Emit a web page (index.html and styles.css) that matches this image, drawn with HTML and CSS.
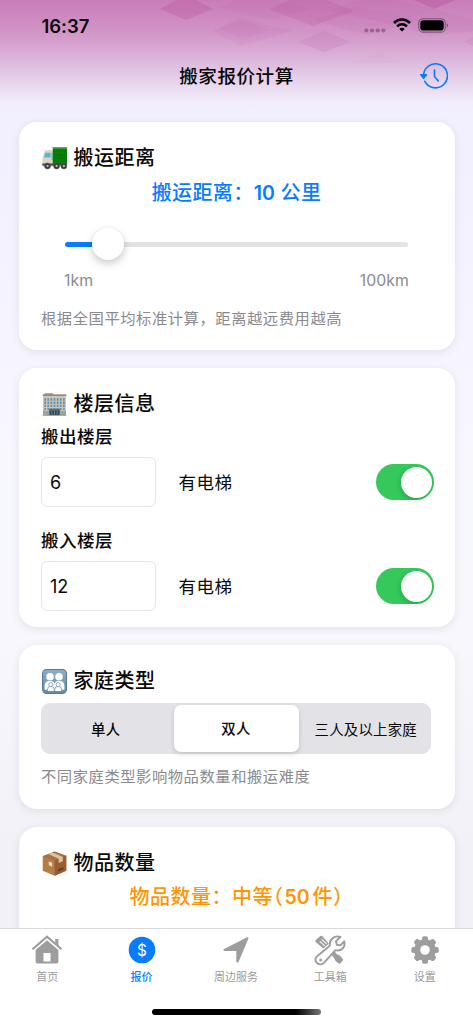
FILE: index.html
```html
<!DOCTYPE html>
<html lang="zh-CN">
<head>
<meta charset="utf-8">
<meta name="viewport" content="width=device-width, initial-scale=1">
<title>搬家报价计算</title>
<link rel="stylesheet" href="styles.css">
</head>
<body>
<div class="app">
  <svg class="pattern" viewBox="0 0 473 122" aria-hidden="true">
    <g fill="#b44a98">
      <path opacity=".28" d="M160 9 186 -5 213 9 186 20z"/>
      <path opacity=".08" d="M213 31 240 18 292 31 240 46z"/>
      <path opacity=".08" d="M220 8 250 -6 310 9 270 20z"/>
      <path opacity=".2" d="M269 9 308 -8 354 11 313 26z"/>
      <path opacity=".06" d="M220 28 243 20 268 30 243 40z"/>
      <path opacity=".13" d="M298 42 324 31 351 42 324 52z"/>
      <path opacity=".08" d="M313 20 356 6 420 20 368 35z"/>
      <path opacity=".36" d="M405 -4 434 9 465 -4z"/>
      <path opacity=".09" d="M330 11 370 -6 434 9 390 24z"/>
      <path opacity=".08" d="M390 22 434 9 473 20 473 31 430 36z"/>
      <path opacity=".1" d="M463 42 473 37 473 46z"/>
      <path opacity=".03" d="M352 63 378 53 405 63z"/>
    </g>
  </svg>
  <header class="status">
    <span class="clock">16:37</span>
    <div class="indicators">
      <svg class="dots" width="22" height="5" viewBox="0 0 22 5" fill="#000" opacity=".27"><circle cx="2.3" cy="2.5" r="2.1"/><circle cx="8" cy="2.5" r="2.1"/><circle cx="13.8" cy="2.5" r="2.1"/><circle cx="19.4" cy="2.5" r="2.1"/></svg>
      <svg class="wifi" width="18" height="14" viewBox="0 0 18 14" fill="none" stroke="#000" stroke-width="2.6"><path d="M1 5C5.4.4 12.6.4 17 5"/><path d="M4.1 8.4c2.8-2.8 7-2.8 9.8 0"/><path d="M9 13.6 6.3 10.9c1.5-1.5 3.9-1.5 5.4 0z" fill="#000" stroke="none"/></svg>
      <svg width="30" height="15" viewBox="0 0 30 15"><rect x=".7" y=".7" width="26.6" height="13.4" rx="4.2" fill="none" stroke="#000" stroke-opacity=".4" stroke-width="1.1"/><rect x="2.3" y="2.3" width="23.4" height="10.2" rx="2.8"/><path d="M28.8 5.2c1.4.7 1.4 3.7 0 4.4z" opacity=".5"/></svg>
    </div>
  </header>
  <nav class="navbar">
    <h1>搬家报价计算</h1>
    <svg class="history" width="28" height="28" viewBox="0 0 28 28" fill="none" stroke="#087cff" stroke-width="1.6" stroke-linecap="round" stroke-linejoin="round"><path d="M3.5 13A12 12 0 1 1 4.8 19.3"/><path d="M.9 12.7h5.4l-2.7 3.6z" fill="#087cff"/><path d="M14.5 8v6.5l3.7 4.4"/></svg>
  </nav>
  <main>
    <section class="card distance">
      <h2><svg class="emoji" viewBox="0 0 24 24"><path d="M.4 18V12L2.5 5Q3 3.8 4.5 3.8H11V20H1z" fill="#ddd5c2"/><path d="M3.2 6.5h5V11H1.8z" fill="#58b5d4"/><path d="M8.8 6.5h1.6v7H8.8z" fill="#87c4cf"/><path d="M10.3 1H24v17H10.3z" fill="#078209"/><path d="M10.3 1H24v1.4H10.3z" fill="#67a967"/><path d="M11 5.4h13M11 8.5h13M11 11.5h13M11 14.5h13" stroke="#087006" stroke-width=".8"/><path d="M.3 16.8h23.4v2H.3z" fill="#454748"/><g fill="#343638" stroke="#666" stroke-width=".5"><circle cx="5.3" cy="19.2" r="2.9"/><circle cx="14" cy="19.2" r="2.9"/><circle cx="21" cy="19.2" r="2.9"/></g><g fill="#bbb"><circle cx="5.3" cy="19.2" r="1.1"/><circle cx="14" cy="19.2" r="1.1"/><circle cx="21" cy="19.2" r="1.1"/></g></svg><span>搬运距离</span></h2>
      <p class="value blue">搬运距离：<span class="num">10</span> 公里</p>
      <div class="slider"><span class="filled"></span><span class="thumb"></span><span class="rest"></span></div>
      <div class="range"><span>1km</span><span>100km</span></div>
      <p class="hint">根据全国平均标准计算，距离越远费用越高</p>
    </section>
    <section class="card floors">
      <h2><svg class="emoji" viewBox="0 0 24 24"><path d="M2.5 1h8v2h-8z" fill="#aaa69d"/><path d="M.7 2.2h22.6v2H.7z" fill="#8e8980"/><path d="M1 4h22v18H1z" fill="#cfc5b5"/><path d="M3 6v11M6 6v11M9 6v11M12 6v11M15 6v11M18 6v11M21 6v11" stroke="#6194b3" stroke-width="1.7" stroke-dasharray="2.3 .8"/><path d="M1 18h6v4H1zM17 18h6v4h-6z" fill="#98a3a4"/><path d="M7 17h10v5.5H7z" fill="#334651"/><path d="M9.5 18v4M12 18v4M14.5 18v4" stroke="#7894a2" stroke-width=".7"/><path d="M6.5 16h11v1.8h-11z" fill="#66716f"/><path d="M.5 22h23v1H.5z" fill="#a9a69f"/></svg><span>楼层信息</span></h2>
      <h3>搬出楼层</h3>
      <div class="row"><div class="field">6</div><span class="lift">有电梯</span><span class="switch"><i></i></span></div>
      <h3 class="second">搬入楼层</h3>
      <div class="row"><div class="field">12</div><span class="lift">有电梯</span><span class="switch"><i></i></span></div>
    </section>
    <section class="card family">
      <h2><svg class="emoji" viewBox="0 0 24 24"><defs><linearGradient id="tile" x1="0" y1="0" x2="0" y2="1"><stop stop-color="#90adc5"/><stop offset="1" stop-color="#648aa8"/></linearGradient></defs><rect x=".5" y=".5" width="23" height="23" rx="4" fill="url(#tile)" stroke="#577a96"/><g fill="#fff"><circle cx="7.7" cy="7.5" r="3.6"/><circle cx="16.3" cy="7.5" r="3.6"/><path d="M2.5 20v-4q0-4.5 4.5-4.5h1.5q3 0 3.5 3 .5-3 3.5-3H17q4.5 0 4.5 4.5v4z"/></g><g fill="#fff" stroke="#7899b4" stroke-width=".8"><path d="M5.3 21v-1.5q0-2.8 3.2-2.8t3.2 2.8V21M12.3 21v-1.5q0-2.8 3.2-2.8t3.2 2.8V21"/><circle cx="8.5" cy="15" r="2"/><circle cx="15.5" cy="15" r="2"/></g></svg><span>家庭类型</span></h2>
      <div class="segments"><span>单人</span><span class="active">双人</span><span>三人及以上家庭</span></div>
      <p class="hint">不同家庭类型影响物品数量和搬运难度</p>
    </section>
    <section class="card items">
      <h2><svg class="emoji" viewBox="0 0 24 24"><path d="M.7 5 12 .4 23.3 4.5V19L12.2 23.8.7 19z" fill="#b77b46"/><path d="M.7 5 12 .4 23.3 4.5 12 9z" fill="#a57346"/><path d="M12 9 23.3 4.5V19L12.2 23.8z" fill="#955e33"/><path d="m6 2.9 3.8-1.6L20 5.8v4l-4 1.6v-4z" fill="#dac4a2"/><path d="m6.5 10 3.3 1.3v3.8l-3.3-1.4z" fill="#e0ded6"/><path d="m15.5 17.5 5-2v2l-5 2.1z" fill="#633d24"/></svg><span>物品数量</span></h2>
      <p class="value orange">物品数量：中等<span class="paren">（</span><span class="num">50</span>件<span class="paren">）</span></p>
    </section>
  </main>
  <footer>
    <div class="tabs">
      <div class="tab"><svg viewBox="0 0 32 32"><path d="M1.5 15.3 16 2.7l14.5 12.6" fill="none" stroke="#9d9d9d" stroke-width="2.1"/><path d="M24.2 5h3.2v7l-3.2-2.8zM4.6 16 16 6.2 27.4 16v11.4q0 2.1-2.1 2.1H6.7q-2.1 0-2.1-2.1z" fill="#9d9d9d"/><path d="M12.5 19h7v8.5h-7z" fill="#fff"/></svg><span>首页</span></div>
      <div class="tab selected"><svg viewBox="0 0 32 32"><circle cx="16" cy="16" r="13.3" fill="#087cff"/><text x="16" y="21.6" text-anchor="middle" fill="#fff" font-size="15.5" font-family="Inter" font-weight="400">$</text></svg><span>报价</span></div>
      <div class="tab"><svg viewBox="0 0 32 32"><path d="M28.5 4.3 18.5 28q-1.7 1.5-2.2-.5V17H4.4q-2-.6-.3-1.9L26.2 3.7q1.8-.9 2.3.6z" fill="#9d9d9d"/></svg><span>周边服务</span></div>
      <div class="tab"><svg viewBox="0 0 32 32"><path d="m1.5 6.2 4.8-4.1q1.3-.8 2.3.4l6.2 7.1-5.4 5-7.2-6.1q-1.5-1.1-.7-2.3z" fill="#9d9d9d"/><path d="m5.7 7.4 5 4.4m-3-6.5 5 4.5" stroke="#fff" stroke-width="1.1"/><path d="m15.5 18 3.2-3 4.4 5.4q3.4.2 6.2 5.7l-3.5 3.8q-5.3-2.8-5.8-6z" fill="#9d9d9d"/><path d="M3.1 22.2 15.8 11.8C15 5.5 20.7.8 26.4 3L22 7.1l.8 3.6 3.6.7 3.8-4.1c1.8 5.9-3.2 10.4-8.8 8.8L10.2 28.7c-4.3 4.6-12.4-1.6-7.1-6.5z" fill="#fff" stroke="#9d9d9d" stroke-width="1.9" stroke-linejoin="round"/><circle cx="6.7" cy="26" r="1.5" fill="#9d9d9d"/></svg><span>工具箱</span></div>
      <div class="tab"><svg viewBox="0 0 32 32"><g fill="#9d9d9d"><circle cx="16" cy="16" r="10.8"/><g id="teeth"><rect x="13" y="2.3" width="6" height="27.4" rx="2"/><rect x="2.3" y="13" width="27.4" height="6" rx="2"/></g><use href="#teeth" transform="rotate(45 16 16)"/></g><circle cx="16" cy="16" r="4.8" fill="#fff"/></svg><span>设置</span></div>
    </div>
    <div class="home-indicator"></div>
  </footer>
</div>
</body>
</html>
```
FILE: styles.css
```css
* { box-sizing: border-box; }
body { margin: 0; font-family: Inter, "Noto Sans CJK SC", sans-serif; color: #080808; }
h1, h2, h3, p { margin: 0; font-weight: 500; }
svg { display: block; flex: none; }
.app { height: 1024px; position: relative; display: flex; flex-direction: column; overflow: hidden; background: linear-gradient(#c97db8 0, #d193c5 30px, #d9add6 53px, #e4cce6 76px, #f1edfc 102px, #f2effe 115px, #f8f7ff 450px, #f7f7fd 640px, #f2f1f8 850px, #f2f1f8 100%); }
.pattern { position: absolute; top: 0; left: 0; width: 473px; height: 122px; }
.status { height: 52px; position: relative; flex: none; display: flex; justify-content: space-between; padding: 0 24px 0 41.5px; }
.clock { font-size: 18.5px; line-height: 52px; font-weight: 600; letter-spacing: -.05px; }
.indicators { display: flex; padding-top: 18px; gap: 7px; margin-right: 1px; }
.dots { margin-top: 10px; }
.navbar { height: 70px; flex: none; position: relative; display: grid; grid-template-columns: 1fr auto 1fr; padding: 9.5px 25px 0; align-items: start; }
.navbar h1 { grid-column: 2; font-size: 18.6px; line-height: 28px; letter-spacing: .5px; }
.history { justify-self: end; }
main { flex: 1; min-height: 0; overflow: hidden; display: flex; flex-direction: column; gap: 18px; padding: 10px 18.5px 0; margin-top: -10px; }
.card { background: #fff; border-radius: 18px; padding: 22px 22.5px 0; flex: none; box-shadow: 0 2px 9px rgba(45, 35, 75, .10); }
h2 { display: flex; align-items: center; gap: 7px; height: 28px; font-size: 20px; line-height: 29px; letter-spacing: .5px; }
.emoji { width: 25px; height: 25px; margin-left: .5px; }
.value { font-size: 20px; line-height: 34px; margin-top: 4px; letter-spacing: .4px; text-align: center; white-space: pre; }
.num { font-weight: 600; font-size: 19.5px; letter-spacing: 0; }
.blue { color: #087cff; }
.orange { color: #ff9500; letter-spacing: .5px; }
.orange .num { margin: 0 3px 0 1px; }
.distance { height: 228px; }
.slider { height: 34px; display: flex; align-items: center; margin: 17px 24px 0; }
.filled { width: 28px; height: 5px; background: #087cff; border-radius: 3px 0 0 3px; }
.thumb { width: 32px; height: 32px; margin: 0 -1px; border-radius: 50%; background: #fff; box-shadow: 0 3px 9px rgba(0, 0, 0, .23); z-index: 1; }
.rest { flex: 1; height: 5px; background: #e3e3e5; border-radius: 0 3px 3px 0; }
.range { display: flex; justify-content: space-between; margin: 8px 23px 0; color: #8a8a8e; font-size: 15.8px; line-height: 24px; letter-spacing: .1px; }
.hint { color: #8a8a8e; font-size: 15.3px; font-weight: 400; line-height: 24px; letter-spacing: .55px; margin-top: 13.5px; white-space: nowrap; }
.floors { height: 259px; }
h3 { font-size: 17.5px; line-height: 25px; height: 25px; margin-top: 6px; letter-spacing: .5px; }
.row { display: flex; align-items: center; margin-top: 8px; }
.field { width: 115px; height: 50px; border: 1px solid #e6e6e8; border-radius: 6px; padding-left: 8px; font-size: 18px; line-height: 49px; }
.lift { font-size: 17.5px; line-height: 26px; letter-spacing: .5px; padding-top: 1px; margin-left: 22.5px; flex: 1; }
.switch { width: 58.5px; height: 35.5px; margin-right: -2px; border-radius: 18px; background: #35c85a; padding: 2.4px; display: flex; justify-content: flex-end; }
.switch i { width: 31px; height: 31px; border-radius: 50%; background: #fff; box-shadow: -1px 2px 5px rgba(0, 0, 0, .18); }
.second { margin-top: 21px; }
.family { height: 164px; }
.segments { width: 390px; height: 51px; margin-top: 7.5px; background: #e3e2e7; border-radius: 9px; display: grid; grid-template-columns: 132.5px 125px 132.5px; align-items: center; text-align: center; font-size: 14.4px; letter-spacing: .25px; }
.segments > :first-child { padding-right: 3px; font-weight: 500; }
.segments .active { background: #fff; height: 47px; line-height: 47px; border-radius: 7px; box-shadow: 0 2px 5px rgba(0, 0, 0, .15); font-weight: 500; }
.segments > :last-child { white-space: nowrap; padding-left: 2px; }
.family .hint { margin-top: 11px; }
.items { height: 170px; }
.items .value { margin-top: 3px; }
.paren { font-feature-settings: "halt"; }
footer { height: 96px; flex: none; position: relative; background: #fff; border-top: 1px solid #d8d7dd; display: flex; flex-direction: column; align-items: center; }
.tabs { width: 100%; height: 80px; display: grid; grid-template-columns: repeat(5, 94.4px); padding-top: 5px; }
.tab { display: flex; flex-direction: column; align-items: center; color: #9b9b9b; font-size: 11px; line-height: 16px; font-weight: 400; }
.tab svg { width: 32px; height: 32px; margin-bottom: 2.5px; }
.selected { color: #087cff; font-weight: 500; }
.home-indicator { width: 169px; height: 5.5px; border-radius: 3px; background: linear-gradient(90deg, #000 85%, #777); }
```
